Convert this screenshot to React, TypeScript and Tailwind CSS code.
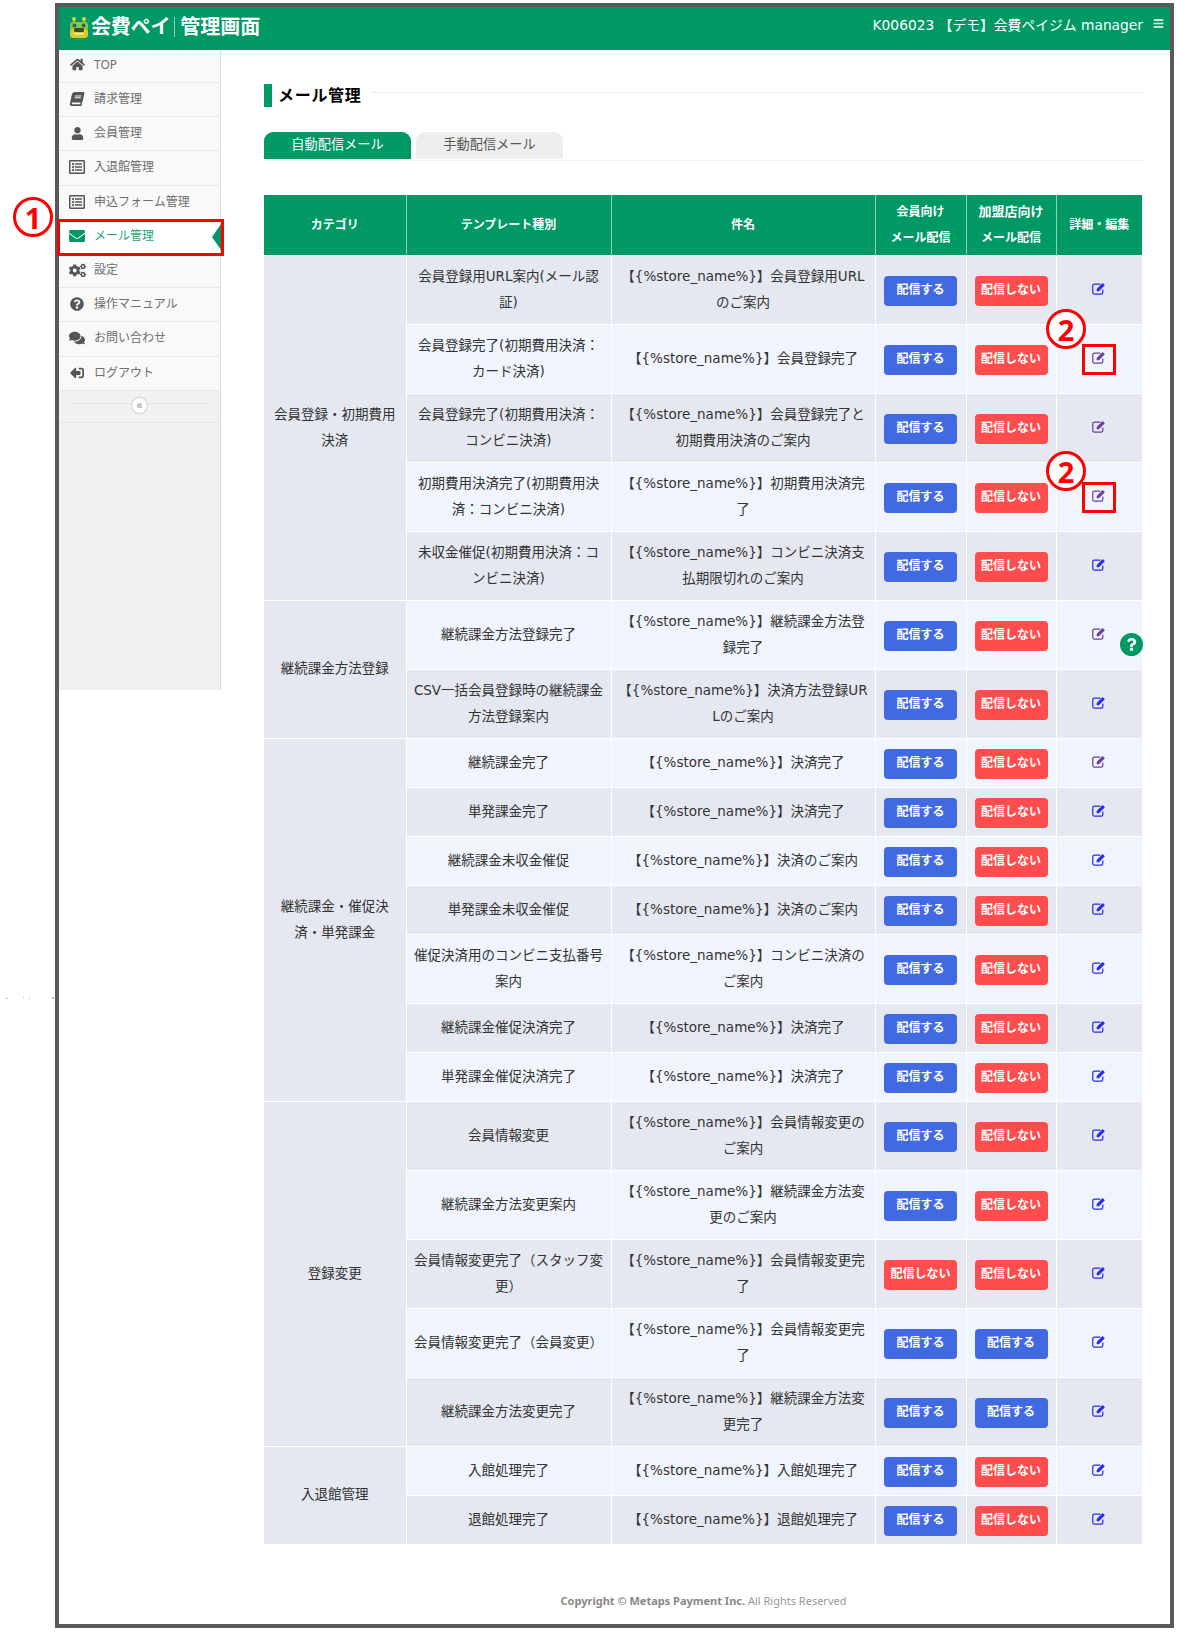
import type { ReactNode } from "react";
import {
  FaBook,
  FaComments,
  FaCogs,
  FaEnvelope,
  FaBars,
  FaHome,
  FaQuestion,
  FaQuestionCircle,
  FaRegListAlt,
  FaSignOutAlt,
  FaUser,
} from "react-icons/fa";

const FONT = "[font-family:'Noto_Sans','Noto_Sans_CJK_JP',sans-serif]";
const WIDE_FONT = "[font-family:'DejaVu_Sans','Noto_Sans_CJK_JP',sans-serif]";

type MenuItem = { label: string; icon: ReactNode; active?: boolean };

const menu: MenuItem[] = [
  { label: "TOP", icon: <FaHome size={15} /> },
  { label: "請求管理", icon: <FaBook size={14} className="-skew-x-12" /> },
  { label: "会員管理", icon: <FaUser size={13} /> },
  { label: "入退館管理", icon: <FaRegListAlt size={16} /> },
  { label: "申込フォーム管理", icon: <FaRegListAlt size={16} /> },
  { label: "メール管理", icon: <FaEnvelope size={16} />, active: true },
  { label: "設定", icon: <FaCogs size={17} /> },
  { label: "操作マニュアル", icon: <FaQuestionCircle size={14} /> },
  { label: "お問い合わせ", icon: <FaComments size={16} /> },
  { label: "ログアウト", icon: <FaSignOutAlt size={14} className="rotate-180" /> },
];

type Row = { type: string; subject: string; member?: boolean; store?: boolean; visited?: boolean };
type Group = { category: string; rows: Row[] };

const groups: Group[] = [
  {
    category: "会員登録・初期費用\n決済",
    rows: [
      { type: "会員登録用URL案内(メール認\n証)", subject: "【{%store_name%}】会員登録用URL\nのご案内" },
      { type: "会員登録完了(初期費用決済：\nカード決済)", subject: "【{%store_name%}】会員登録完了", visited: true },
      { type: "会員登録完了(初期費用決済：\nコンビニ決済)", subject: "【{%store_name%}】会員登録完了と\n初期費用決済のご案内", visited: true },
      { type: "初期費用決済完了(初期費用決\n済：コンビニ決済)", subject: "【{%store_name%}】初期費用決済完\n了", visited: true },
      { type: "未収金催促(初期費用決済：コ\nンビニ決済)", subject: "【{%store_name%}】コンビニ決済支\n払期限切れのご案内" },
    ],
  },
  {
    category: "継続課金方法登録",
    rows: [
      { type: "継続課金方法登録完了", subject: "【{%store_name%}】継続課金方法登\n録完了", visited: true },
      { type: "CSV一括会員登録時の継続課金\n方法登録案内", subject: "【{%store_name%}】決済方法登録UR\nLのご案内" },
    ],
  },
  {
    category: "継続課金・催促決\n済・単発課金",
    rows: [
      { type: "継続課金完了", subject: "【{%store_name%}】決済完了", visited: true },
      { type: "単発課金完了", subject: "【{%store_name%}】決済完了" },
      { type: "継続課金未収金催促", subject: "【{%store_name%}】決済のご案内" },
      { type: "単発課金未収金催促", subject: "【{%store_name%}】決済のご案内" },
      { type: "催促決済用のコンビニ支払番号\n案内", subject: "【{%store_name%}】コンビニ決済の\nご案内" },
      { type: "継続課金催促決済完了", subject: "【{%store_name%}】決済完了" },
      { type: "単発課金催促決済完了", subject: "【{%store_name%}】決済完了" },
    ],
  },
  {
    category: "登録変更",
    rows: [
      { type: "会員情報変更", subject: "【{%store_name%}】会員情報変更の\nご案内" },
      { type: "継続課金方法変更案内", subject: "【{%store_name%}】継続課金方法変\n更のご案内" },
      { type: "会員情報変更完了（スタッフ変\n更）", subject: "【{%store_name%}】会員情報変更完\n了", member: false },
      { type: "会員情報変更完了（会員変更）", subject: "【{%store_name%}】会員情報変更完\n了", store: true },
      { type: "継続課金方法変更完了", subject: "【{%store_name%}】継続課金方法変\n更完了", store: true },
    ],
  },
  {
    category: "入退館管理",
    rows: [
      { type: "入館処理完了", subject: "【{%store_name%}】入館処理完了" },
      { type: "退館処理完了", subject: "【{%store_name%}】退館処理完了" },
    ],
  },
];

function SendButton({ on }: { on: boolean }) {
  return (
    <span
      className={
        "relative top-px inline-flex items-center justify-center w-[73px] h-[30px] rounded-[4px] text-[12px] font-bold text-white align-middle " +
        (on ? "bg-[#4169e1]" : "bg-[#ff4c4c]")
      }
    >
      {on ? "配信する" : "配信しない"}
    </span>
  );
}

function EditIcon({ visited }: { visited?: boolean }) {
  return (
    <svg
      width="14"
      height="13"
      viewBox="0 0 15 14"
      className={"inline-block relative -top-px " + (visited ? "text-[#6b3fa0]" : "text-[#2a2ae8]")}
    >
      <path
        d="M11.6 8v3.2a1.8 1.8 0 0 1-1.8 1.8H2.6a1.8 1.8 0 0 1-1.8-1.8V4a1.8 1.8 0 0 1 1.8-1.8H9"
        fill="none"
        stroke="currentColor"
        strokeWidth="1.3"
      />
      <path d="M5 7.6 11.4 1.2l2.4 2.4L7.4 10H5z" fill="currentColor" />
    </svg>
  );
}

function Logo() {
  return (
    <svg width="20" height="23" viewBox="0 0 20 23" className="shrink-0 mb-[3px]">
      <path d="M5 3v4M15 3v4" stroke="#cfc81e" strokeWidth="1.5" />
      <circle cx="5" cy="3" r="2" fill="#e0d820" />
      <circle cx="15" cy="3" r="2" fill="#e0d820" />
      <rect x="1" y="6" width="18" height="9" rx="3" fill="#8fc24a" />
      <circle cx="5.5" cy="9.5" r="2" fill="#1f6f4f" />
      <circle cx="14.5" cy="9.5" r="2" fill="#1f6f4f" />
      <rect x="1" y="13" width="18" height="9" rx="3" fill="#d8cc2a" />
      <rect x="5" y="12" width="10" height="4" rx="1.5" fill="#3d4a22" />
      <rect x="5" y="17" width="10" height="1.5" fill="#f2ecb0" />
    </svg>
  );
}

function Sidebar() {
  return (
    <aside className="w-[162px] h-[640px] shrink-0 flex flex-col bg-[#f1f1f1] border-r border-[#dcdcdc]">
      {menu.map((item, i) => (
        <div
          key={item.label}
          className={
            "relative flex items-center border-b border-[#e8e8e8] text-[12px] pl-px " +
            (i === 0 ? "h-[33px] pb-[3px] " : "h-[34.2px] pb-[1px] ") +
            (item.active ? "bg-white text-[#17a673]" : "bg-[#f9f9f9] text-[#6e6e6e]")
          }
        >
          <span className={"w-[34px] flex justify-center shrink-0 " + (item.active ? "text-[#009966]" : "text-[#555555]")}>
            {item.icon}
          </span>
          <span>{item.label}</span>
          {item.active && (
            <svg width="9" height="26" viewBox="0 0 9 26" className="absolute right-[-1px] top-[4px]">
              <polygon points="0,13 9,0 9,26" fill="#009966" />
            </svg>
          )}
        </div>
      ))}
      <div className="h-[32px] flex items-start px-[13px] pt-[12px] border-b border-[#e6e6e6]">
        <div className="flex-1 h-px bg-[#e0e0e0]" />
        <div className="w-[17px] h-[17px] -mt-[6px] rounded-full bg-white border border-[#cccccc] flex items-center justify-center text-[12px] leading-none text-[#999999] shrink-0">
          «
        </div>
        <div className="flex-1 h-px bg-[#e0e0e0]" />
      </div>
    </aside>
  );
}

function MailTable() {
  let index = 0;
  return (
    <table className="w-[878px] table-fixed border-collapse text-[13.5px] leading-[25.7px] text-[#333333] text-center">
      <colgroup>
        <col className="w-[142px]" />
        <col className="w-[205px]" />
        <col className="w-[264px]" />
        <col className="w-[91px]" />
        <col className="w-[90px]" />
        <col className="w-[86px]" />
      </colgroup>
      <thead>
        <tr className="h-[60px] bg-[#009966] text-white text-[12px] font-bold">
          <th className="border-r border-[#8fd0b8]">カテゴリ</th>
          <th className="border-r border-[#8fd0b8]">テンプレート種別</th>
          <th className="border-r border-[#8fd0b8]">件名</th>
          <th className="border-r border-[#8fd0b8]">会員向け<br />メール配信</th>
          <th className="border-r border-[#8fd0b8]"><span className="text-[13px]">加盟店向け</span><br />メール配信</th>
          <th>詳細・編集</th>
        </tr>
      </thead>
      <tbody className={WIDE_FONT}>
        {groups.map((group) =>
          group.rows.map((row, r) => {
            const gray = index++ % 2 === 0;
            const tall = row.type.includes("\n") || row.subject.includes("\n");
            return (
              <tr key={row.type + index} className={(tall ? "h-[69px] " : "h-[49px] ") + (gray ? "bg-[#e5e8f0]" : "bg-[#f0f4fc]")}>
                {r === 0 && (
                  <td rowSpan={group.rows.length} className="bg-[#e5e8f0] border border-white border-l-0 whitespace-pre-line">
                    {group.category}
                  </td>
                )}
                <td className="border border-white whitespace-pre-line">{row.type}</td>
                <td className="border border-white whitespace-pre-line">{row.subject}</td>
                <td className="border border-white">
                  <SendButton on={row.member !== false} />
                </td>
                <td className="border border-white">
                  <SendButton on={row.store === true} />
                </td>
                <td className="border border-white border-r-0">
                  <EditIcon visited={row.visited} />
                </td>
              </tr>
            );
          }),
        )}
      </tbody>
    </table>
  );
}

function Circled({ n, className }: { n: string; className: string }) {
  return (
    <div
      className={
        "absolute w-[40px] h-[40px] rounded-full border-[3px] border-[#ff0000] bg-white/80 flex items-center justify-center text-[29px] leading-none font-bold text-[#ff0000] " +
        className
      }
    >
      {n}
    </div>
  );
}

export default function App() {
  return (
    <div className={"relative w-[1177px] h-[1632px] bg-white overflow-hidden pl-[55px] pt-[3px] " + FONT}>
      <div className="w-[1119px] h-[1625px] border-4 border-[#595959] bg-white flex flex-col">
        <header className="h-[43px] shrink-0 bg-[#009966] flex items-center text-white pl-[10px] pr-[6px]">
          <Logo />
          <span className="ml-[2px] mb-[3px] text-[20px] font-bold tracking-[-0.2px]">会費ペイ</span>
          <span className="ml-[4px] mb-[3px] w-px h-[20px] bg-[#8fd0b8]" />
          <span className="ml-[5px] mb-[3px] text-[20px] font-bold">管理画面</span>
          <span className={"ml-auto mb-[6px] text-[13.8px] " + WIDE_FONT}>K006023 【デモ】会費ペイジム manager</span>
          <FaBars size={11} className="ml-[10px] mb-[10px]" />
        </header>

        <div className="flex flex-1">
          <Sidebar />
          <main className="flex-1 pl-[43px] pr-[27px] flex flex-col">
            <div className="mt-[34px] flex items-start h-[23px]">
              <div className="w-[8px] h-[23px] bg-[#009966]" />
              <h1 className="ml-[6px] text-[16px] leading-[23px] font-bold text-black tracking-[0.7px]">メール管理</h1>
              <div className="ml-[9px] mt-[8px] flex-1 h-px bg-[#eeeeee]" />
            </div>

            <div className="mt-[25px] flex gap-[5px] border-b border-[#f0f0f0] h-[29px] text-[13.2px]">
              <div className="w-[147px] h-[27px] rounded-t-[9px] bg-[#009966] text-white flex items-center justify-center pb-[1px]">
                自動配信メール
              </div>
              <div className="w-[147px] h-[27px] rounded-t-[9px] bg-[#eeeeee] text-[#555555] flex items-center justify-center pb-[1px]">
                手動配信メール
              </div>
            </div>

            <div className="mt-[34px]">
              <MailTable />
            </div>

            <p className="mt-[48px] text-center text-[11px] text-[#999999]">
              <span className="font-bold text-[#888888]">Copyright © Metaps Payment Inc.</span> All Rights Reserved
            </p>
          </main>
        </div>
      </div>

      {/* 操作説明の赤枠と番号 */}
      <div className="absolute left-[57px] top-[219px] w-[167px] h-[37px] border-[3px] border-[#ff0000]" />
      <Circled n="1" className="left-[13px] top-[197px]" />
      <div className="absolute left-[1082px] top-[344px] w-[34px] h-[31px] border-[3px] border-[#ff0000]" />
      <Circled n="2" className="left-[1046px] top-[309px]" />
      <div className="absolute left-[1082px] top-[482px] w-[34px] h-[31px] border-[3px] border-[#ff0000]" />
      <Circled n="2" className="left-[1046px] top-[451px]" />

      <div className="absolute left-[1120px] top-[633px] w-[23px] h-[23px] rounded-full bg-[#009966] text-white flex items-center justify-center">
        <FaQuestion size={13} />
      </div>

      <span className="absolute left-[6px] top-[998px] w-[2px] h-px bg-[#bbbbbb]" />
      <span className="absolute left-[23px] top-[997px] w-px h-px bg-[#bbbbbb]" />
      <span className="absolute left-[29px] top-[998px] w-px h-px bg-[#bbbbbb]" />
      <span className="absolute left-[52px] top-[997px] w-[2px] h-[2px] bg-[#bbbbbb]" />
    </div>
  );
}
